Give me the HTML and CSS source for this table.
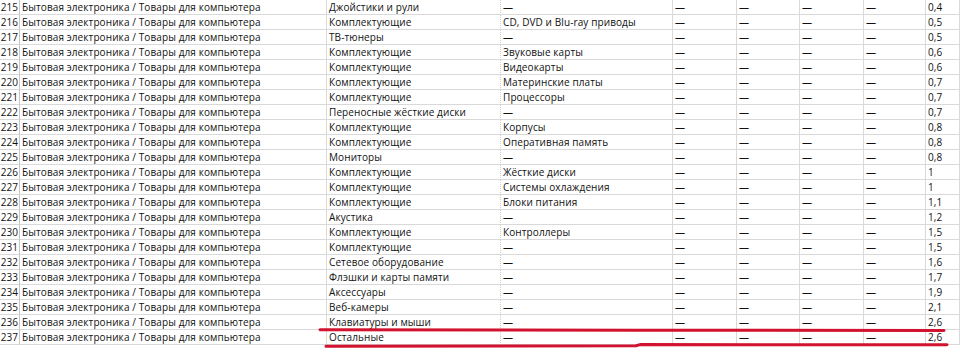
FILE: index.html
```html
<!DOCTYPE html>
<html lang="ru">
<head>
<meta charset="utf-8">
<title>Товары для компьютера</title>
<link rel="stylesheet" href="styles.css">
</head>
<body>
<div class="page">
<div class="sheet">
<div class="c num">215</div><div class="c">Бытовая электроника / Товары для компьютера</div><div class="c">Джойстики и рули</div><div class="c sep">—</div><div class="c">—</div><div class="c">—</div><div class="c">—</div><div class="c">—</div><div class="c">0,4</div>
<div class="c num">216</div><div class="c">Бытовая электроника / Товары для компьютера</div><div class="c">Комплектующие</div><div class="c sep">CD, DVD и Blu-ray приводы</div><div class="c">—</div><div class="c">—</div><div class="c">—</div><div class="c">—</div><div class="c">0,5</div>
<div class="c num">217</div><div class="c">Бытовая электроника / Товары для компьютера</div><div class="c">ТВ-тюнеры</div><div class="c sep">—</div><div class="c">—</div><div class="c">—</div><div class="c">—</div><div class="c">—</div><div class="c">0,5</div>
<div class="c num">218</div><div class="c">Бытовая электроника / Товары для компьютера</div><div class="c">Комплектующие</div><div class="c sep">Звуковые карты</div><div class="c">—</div><div class="c">—</div><div class="c">—</div><div class="c">—</div><div class="c">0,6</div>
<div class="c num">219</div><div class="c">Бытовая электроника / Товары для компьютера</div><div class="c">Комплектующие</div><div class="c sep">Видеокарты</div><div class="c">—</div><div class="c">—</div><div class="c">—</div><div class="c">—</div><div class="c">0,6</div>
<div class="c num">220</div><div class="c">Бытовая электроника / Товары для компьютера</div><div class="c">Комплектующие</div><div class="c sep">Материнские платы</div><div class="c">—</div><div class="c">—</div><div class="c">—</div><div class="c">—</div><div class="c">0,7</div>
<div class="c num">221</div><div class="c">Бытовая электроника / Товары для компьютера</div><div class="c">Комплектующие</div><div class="c sep">Процессоры</div><div class="c">—</div><div class="c">—</div><div class="c">—</div><div class="c">—</div><div class="c">0,7</div>
<div class="c num">222</div><div class="c">Бытовая электроника / Товары для компьютера</div><div class="c">Переносные жёсткие диски</div><div class="c sep">—</div><div class="c">—</div><div class="c">—</div><div class="c">—</div><div class="c">—</div><div class="c">0,7</div>
<div class="c num">223</div><div class="c">Бытовая электроника / Товары для компьютера</div><div class="c">Комплектующие</div><div class="c sep">Корпусы</div><div class="c">—</div><div class="c">—</div><div class="c">—</div><div class="c">—</div><div class="c">0,8</div>
<div class="c num">224</div><div class="c">Бытовая электроника / Товары для компьютера</div><div class="c">Комплектующие</div><div class="c sep">Оперативная память</div><div class="c">—</div><div class="c">—</div><div class="c">—</div><div class="c">—</div><div class="c">0,8</div>
<div class="c num">225</div><div class="c">Бытовая электроника / Товары для компьютера</div><div class="c">Мониторы</div><div class="c sep">—</div><div class="c">—</div><div class="c">—</div><div class="c">—</div><div class="c">—</div><div class="c">0,8</div>
<div class="c num">226</div><div class="c">Бытовая электроника / Товары для компьютера</div><div class="c">Комплектующие</div><div class="c sep">Жёсткие диски</div><div class="c">—</div><div class="c">—</div><div class="c">—</div><div class="c">—</div><div class="c">1</div>
<div class="c num">227</div><div class="c">Бытовая электроника / Товары для компьютера</div><div class="c">Комплектующие</div><div class="c sep">Системы охлаждения</div><div class="c">—</div><div class="c">—</div><div class="c">—</div><div class="c">—</div><div class="c">1</div>
<div class="c num">228</div><div class="c">Бытовая электроника / Товары для компьютера</div><div class="c">Комплектующие</div><div class="c sep">Блоки питания</div><div class="c">—</div><div class="c">—</div><div class="c">—</div><div class="c">—</div><div class="c">1,1</div>
<div class="c num">229</div><div class="c">Бытовая электроника / Товары для компьютера</div><div class="c">Акустика</div><div class="c sep">—</div><div class="c">—</div><div class="c">—</div><div class="c">—</div><div class="c">—</div><div class="c">1,2</div>
<div class="c num">230</div><div class="c">Бытовая электроника / Товары для компьютера</div><div class="c">Комплектующие</div><div class="c sep">Контроллеры</div><div class="c">—</div><div class="c">—</div><div class="c">—</div><div class="c">—</div><div class="c">1,5</div>
<div class="c num">231</div><div class="c">Бытовая электроника / Товары для компьютера</div><div class="c">Комплектующие</div><div class="c sep">—</div><div class="c">—</div><div class="c">—</div><div class="c">—</div><div class="c">—</div><div class="c">1,5</div>
<div class="c num">232</div><div class="c">Бытовая электроника / Товары для компьютера</div><div class="c">Сетевое оборудование</div><div class="c sep">—</div><div class="c">—</div><div class="c">—</div><div class="c">—</div><div class="c">—</div><div class="c">1,6</div>
<div class="c num">233</div><div class="c">Бытовая электроника / Товары для компьютера</div><div class="c">Флэшки и карты памяти</div><div class="c sep">—</div><div class="c">—</div><div class="c">—</div><div class="c">—</div><div class="c">—</div><div class="c">1,7</div>
<div class="c num">234</div><div class="c">Бытовая электроника / Товары для компьютера</div><div class="c">Аксессуары</div><div class="c sep">—</div><div class="c">—</div><div class="c">—</div><div class="c">—</div><div class="c">—</div><div class="c">1,9</div>
<div class="c num">235</div><div class="c">Бытовая электроника / Товары для компьютера</div><div class="c">Веб-камеры</div><div class="c sep">—</div><div class="c">—</div><div class="c">—</div><div class="c">—</div><div class="c">—</div><div class="c">2,1</div>
<div class="c num">236</div><div class="c">Бытовая электроника / Товары для компьютера</div><div class="c">Клавиатуры и мыши</div><div class="c sep">—</div><div class="c">—</div><div class="c">—</div><div class="c">—</div><div class="c">—</div><div class="c">2,6</div>
<div class="c num">237</div><div class="c">Бытовая электроника / Товары для компьютера</div><div class="c">Остальные</div><div class="c sep">—</div><div class="c">—</div><div class="c">—</div><div class="c">—</div><div class="c">—</div><div class="c">2,6</div>
</div>
<svg class="marks" width="960" height="357" viewBox="0 0 960 357" aria-hidden="true">
<path d="M320 329.8 L640 330.2 L944 330.6" />
<path d="M326 346.2 L636 345.8 L640 344.6 L947 344.8" />
</svg>
</div>
</body>
</html>
```

FILE: styles.css
```css
* { box-sizing: border-box; }
html, body { margin: 0; padding: 0; background: #fff; }
.page {
  position: relative;
  width: 960px;
  height: 357px;
  overflow: hidden;
}
.sheet {
  display: grid;
  grid-template-columns: 20px 307px 174px 172px 64px 63px 64px 62px 1fr;
  grid-auto-rows: 15px;
  font-family: "Open Sans", "Noto Sans", sans-serif;
  font-size: 10px;
  letter-spacing: 0.1px;
  line-height: 14px;
  color: #111;
}
.c {
  border-right: 1px solid #d9d9d9;
  border-bottom: 1px solid #d9d9d9;
  padding-left: 2px;
  white-space: nowrap;
  overflow: hidden;
}
.num {
  text-align: right;
  padding-left: 0;
  padding-right: 1px;
  letter-spacing: 0;
  border-right-color: #c6c6c6;
}
.sheet > .c:nth-child(9n+3) { border-right: 1px dotted #cfcfcf; }
.marks {
  position: absolute;
  left: 0;
  top: 0;
  pointer-events: none;
}
.marks path {
  fill: none;
  stroke: #d2122e;
  stroke-width: 3;
  stroke-linecap: round;
  stroke-linejoin: round;
}
```
